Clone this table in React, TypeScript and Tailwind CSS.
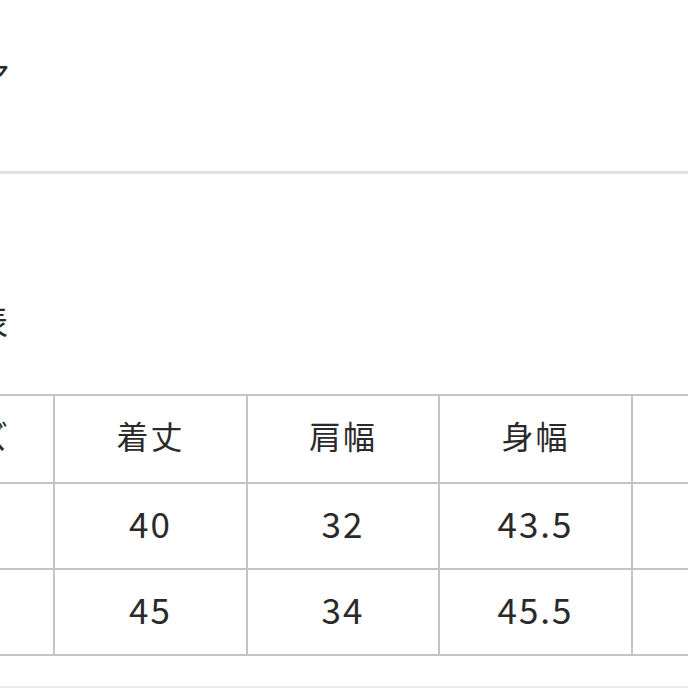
const rows = [
  { size: 'S', length: '40', shoulder: '32', width: '43.5', sleeve: '' },
  { size: 'M', length: '45', shoulder: '34', width: '45.5', sleeve: '' },
];

export default function App() {
  return (
    <div className="w-[688px] h-[688px] overflow-hidden bg-white text-[#2a2a2a] font-['Noto_Sans_CJK_JP','Noto_Sans',sans-serif]">
      {/* product title, cut off at the left edge */}
      <div className="h-[171px] pt-[56px]">
        <div className="-ml-[300px] w-[310px] text-right text-[33px] leading-[40px] whitespace-nowrap">
          アイテム詳細ア
        </div>
      </div>
      <div className="h-[3px] bg-[#e2e2e2]" />

      <div className="h-[220px] pt-[126px]">
        <div className="-ml-[300px] w-[308px] text-right text-[33px] leading-[40px] whitespace-nowrap">
          サイズ表
        </div>
      </div>

      <table className="-ml-[140px] w-[965px] table-fixed border-collapse">
        <colgroup>
          <col className="w-[193px]" />
          <col className="w-[193px]" />
          <col className="w-[192px]" />
          <col className="w-[193px]" />
          <col className="w-[194px]" />
        </colgroup>
        <thead>
          <tr className="h-[88px]">
            {['サイズ', '着丈', '肩幅', '身幅', '袖丈'].map((h, i) => (
              <th
                key={h}
                className={`border-2 border-[#c4c4c4] pb-[8px] font-normal text-[32px] tracking-[2px] ${i === 0 ? 'pl-[4px]' : ''}`}
              >
                {h}
              </th>
            ))}
          </tr>
        </thead>
        <tbody>
          {rows.map(r => (
            <tr key={r.size} className="h-[86px]">
              <td className="border-2 border-[#c4c4c4] pb-[6px] text-center text-[35px]">{r.size}</td>
              <td className="border-2 border-[#c4c4c4] pb-[6px] text-center text-[35px] tracking-[2px]">{r.length}</td>
              <td className="border-2 border-[#c4c4c4] pb-[6px] text-center text-[35px] tracking-[2px]">{r.shoulder}</td>
              <td className="border-2 border-[#c4c4c4] pb-[6px] text-center text-[35px] tracking-[2px]">{r.width}</td>
              <td className="border-2 border-[#c4c4c4] pb-[6px] text-center text-[35px]">{r.sleeve}</td>
            </tr>
          ))}
        </tbody>
      </table>

      <div className="mt-[30px] h-[2px] bg-[#ececec]" />
    </div>
  );
}
